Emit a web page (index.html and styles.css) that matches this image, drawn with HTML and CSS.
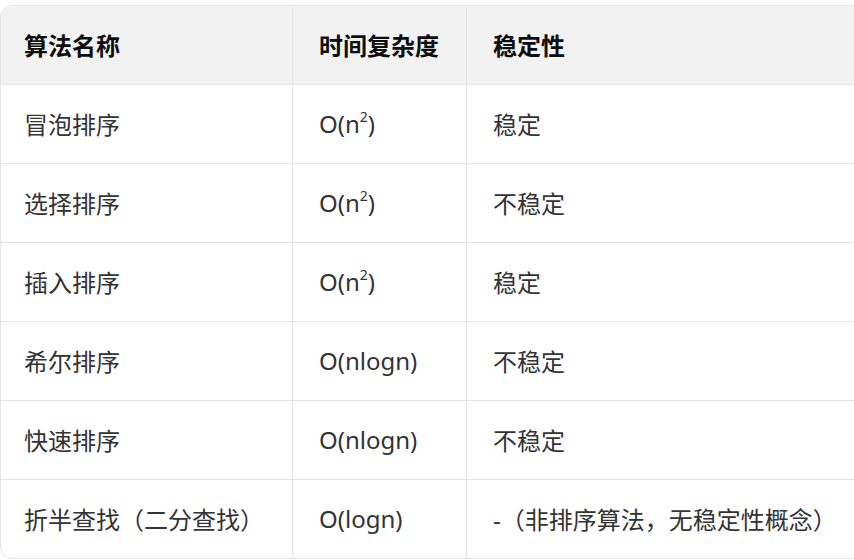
FILE: index.html
```html
<!DOCTYPE html>
<html lang="zh">
<head>
<meta charset="utf-8">
<link rel="stylesheet" href="styles.css">
</head>
<body>
<div class="wrap">
  <table class="tbl">
    <thead>
      <tr><th class="c1">算法名称</th><th class="c2">时间复杂度</th><th class="c3">稳定性</th></tr>
    </thead>
    <tbody>
      <tr><td class="c1">冒泡排序</td><td class="c2">O(n<sup>2</sup>)</td><td class="c3">稳定</td></tr>
      <tr><td class="c1">选择排序</td><td class="c2">O(n<sup>2</sup>)</td><td class="c3">不稳定</td></tr>
      <tr><td class="c1">插入排序</td><td class="c2">O(n<sup>2</sup>)</td><td class="c3">稳定</td></tr>
      <tr><td class="c1">希尔排序</td><td class="c2">O(nlogn)</td><td class="c3">不稳定</td></tr>
      <tr><td class="c1">快速排序</td><td class="c2">O(nlogn)</td><td class="c3">不稳定</td></tr>
      <tr><td class="c1">折半查找（二分查找）</td><td class="c2">O(logn)</td><td class="c3">-（非排序算法，无稳定性概念）</td></tr>
    </tbody>
  </table>
</div>
</body>
</html>
```
FILE: styles.css
```css
html, body {
  margin: 0;
  padding: 0;
  background: #ffffff;
  overflow: hidden;
}
body {
  font-family: "Noto Sans", "Noto Sans CJK SC", sans-serif;
}
.wrap {
  margin-top: 5px;
  width: 900px;
  border: 1px solid #e6e6e6;
  border-radius: 12px;
  overflow: hidden;
}
.tbl {
  border-collapse: separate;
  border-spacing: 0;
  width: 100%;
  table-layout: fixed;
}
.tbl th, .tbl td {
  box-sizing: border-box;
  height: 79px;
  padding: 0 0 1px 0;
  text-align: left;
  vertical-align: middle;
  border-bottom: 1px solid #e6e6e6;
  font-size: 24px;
  white-space: nowrap;
}
.tbl tbody tr:last-child td {
  border-bottom: none;
  height: 78px;
}
.tbl th {
  background: #f2f2f2;
  color: #0d0d0d;
  font-weight: 700;
}
.tbl td {
  color: #333333;
  font-weight: 400;
}
.c1 {
  width: 292px;
  padding-left: 23px !important;
  border-right: 1px solid #e6e6e6;
}
.c2 {
  width: 174px;
  padding-left: 26px !important;
  border-right: 1px solid #e6e6e6;
}
.c3 {
  padding-left: 26px !important;
}
sup {
  font-size: 14px;
  line-height: 0;
  vertical-align: 11px;
}
```
